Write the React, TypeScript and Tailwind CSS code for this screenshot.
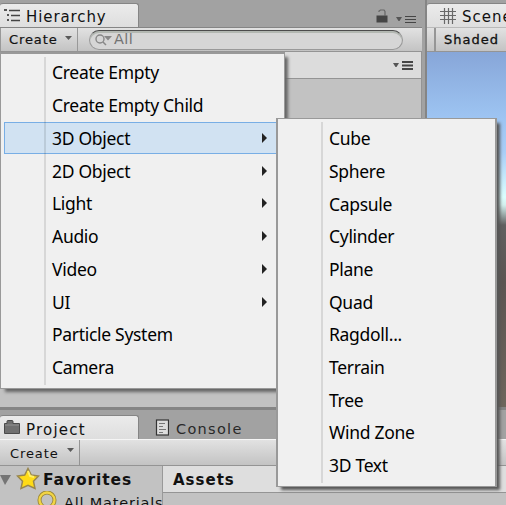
import React from "react";

const CREATE_ITEMS = [
  { label: "Create Empty" },
  { label: "Create Empty Child" },
  { label: "3D Object", sub: true, active: true },
  { label: "2D Object", sub: true },
  { label: "Light", sub: true },
  { label: "Audio", sub: true },
  { label: "Video", sub: true },
  { label: "UI", sub: true },
  { label: "Particle System" },
  { label: "Camera" },
];

const OBJECT_ITEMS = [
  "Cube", "Sphere", "Capsule", "Cylinder", "Plane", "Quad",
  "Ragdoll...", "Terrain", "Tree", "Wind Zone", "3D Text",
];

const BAR = "bg-linear-to-b from-[#e2e2e2] to-[#c3c3c3]";
const TAB = "rounded-t-[3px] border-t border-r border-t-[#858585] border-r-[#858585] bg-linear-to-b from-[#ebebeb] to-[#dedede]";

function Caret() {
  return (
    <svg width="7" height="4" viewBox="0 0 7 4" className="shrink-0">
      <path d="M0 0H7L3.5 4Z" fill="#595959" />
    </svg>
  );
}

function PaneMenu({ bold = false }: { bold?: boolean }) {
  return (
    <svg width="20" height="9" viewBox="0 0 20 9" className="shrink-0">
      <path d="M0 2H6L3.5 6H2.5Z" fill="#555" />
      {bold ? (
        <path d="M9 1H20M9 4.5H20M9 8H20" stroke="#454545" strokeWidth="1.8" />
      ) : (
        <path d="M9 1.5H20M9 4.5H20M9 7.5H20" stroke="#454545" />
      )}
    </svg>
  );
}

function Hierarchy() {
  return (
    <section className="flex w-[422px] shrink-0 flex-col">
      <div className="flex h-[27px] shrink-0 items-end bg-[#a2a2a2]">
        <div className={`flex h-6 w-[139px] items-center pl-1 ${TAB}`}>
          <svg width="17" height="14" viewBox="0 0 17 14" className="-mt-0.5 shrink-0">
            <path d="M0 2H3M3 7H5M3 12H5" stroke="#555" strokeWidth="1.8" />
            <path d="M5 2.5H16M7 7.5H16M7 12.5H16" stroke="#444" strokeWidth="1.6" />
          </svg>
          <span className="ml-[5px] mt-[3px] text-[15px] tracking-[0.9px]">Hierarchy</span>
        </div>
        <div className="ml-auto flex items-center pr-[6px]">
          <svg width="12" height="14" viewBox="0 0 12 14" className="mb-1">
            <rect x="0.5" y="6.5" width="11" height="7" fill="#454545" />
            <path d="M3 3V2L4.5 1H8L9 2.5V7" fill="none" stroke="#666" strokeWidth="1.2" />
          </svg>
          <div className="mb-px ml-2 mt-1"><PaneMenu /></div>
        </div>
      </div>
      <div className={`flex h-[25px] shrink-0 items-center border-t border-b border-t-[#858585] border-b-[#949494] ${BAR}`}>
        <div className="flex h-full w-[78px] shrink-0 items-center border-r border-l border-[#999] pl-2 text-[13px]">
          <span className="mt-px w-[50px] tracking-[0.9px] [-webkit-text-stroke:0.2px]">Create</span>
          <span className="mb-1 ml-1.5 flex"><Caret /></span>
        </div>
        <div className="ml-[11px] flex h-5 w-[314px] items-center rounded-full border border-[#999] border-t-[#4c4c4c] bg-[#d6d6d6] pl-[5px] shadow-[inset_0_2px_0_#b3b8b2]">
          <svg width="17" height="12" viewBox="0 0 17 12" className="shrink-0">
            <circle cx="5" cy="5" r="4" fill="none" stroke="#888" strokeWidth="1.4" />
            <path d="M8 8L11 11" stroke="#888" strokeWidth="1.5" />
            <path d="M9 2H17L13 6.5Z" fill="#888" />
          </svg>
          <span className="mb-px ml-0.5 text-[14.5px] leading-none tracking-[0.4px] text-[#737373]">All</span>
        </div>
      </div>
      <div className="flex h-[27px] shrink-0 items-center justify-end border-r border-b border-[#949494] bg-[#dcdcdc] pr-[8px]">
        <PaneMenu bold />
      </div>
      <div className="flex-1 border-r border-[#949494] bg-[#c2c2c2]" />
    </section>
  );
}

function Scene() {
  return (
    <section className="-ml-px flex w-[81px] shrink-0 flex-col overflow-hidden border-l-2 border-[#858585]">
      <div className="flex h-[27px] shrink-0 items-end bg-[#a2a2a2]">
        <div className={`flex h-6 w-[100px] shrink-0 items-center pl-3 ${TAB}`}>
          <svg width="18" height="18" viewBox="0 0 18 18" className="shrink-0">
            <path d="M5.5 1V17M9.5 1V17M13.5 1V17M1 4.5H17M1 8.5H17M1 12.5H17" stroke="#686868" strokeWidth="1.2" />
          </svg>
          <span className="ml-[5px] mt-[3px] text-[15px] tracking-[1px]">Scene</span>
        </div>
      </div>
      <div className={`flex h-[25px] shrink-0 items-center border-t border-b border-t-[#b9b9b9] border-b-[#949494] ${BAR}`}>
        <div className="ml-[7px] flex h-full items-center border-l-2 border-[#969696] pl-2 pt-px text-[13px] tracking-[1px] [-webkit-text-stroke:0.3px]">Shaded</div>
      </div>
      <div className="flex-1 bg-[linear-gradient(#87a6d8_0px,#9dc4f2_65px,#a9cef7_100px,#dbffff_145px,#d3f0ee_153px,#606060_173px,#5c5552_230px,#6e665c_355px)]" />
    </section>
  );
}

function Project() {
  return (
    <section className="flex h-[98px] shrink-0 flex-col border-t-[3px] border-[#858585]">
      <div className="flex h-[29px] shrink-0 items-end bg-[#a2a2a2]">
        <div className={`flex h-6 w-[139px] shrink-0 items-center pl-1 ${TAB}`}>
          <svg width="17" height="14" viewBox="0 0 17 14" className="-mt-0.5 shrink-0">
            <path d="M0.5 3.5H3V1.5Q3 0.5 4 0.5H8Q9 0.5 9 1.5V3.5H15.5V13.5H0.5Z" fill="#707070" stroke="#4b4b4b" />
            <path d="M1 5H15" stroke="#919191" />
          </svg>
          <span className="ml-[5px] mt-[5px] text-[15px] tracking-[1.2px]">Project</span>
        </div>
        <div className="ml-4 flex h-6 items-center">
          <svg width="14" height="17" viewBox="0 0 14 17">
            <rect x="1.5" y="1" width="12" height="15" fill="#ddd" stroke="#343434" strokeWidth="1.2" />
            <path d="M4 4.5H10M4 7.5H8M4 10.5H11M4 13.5H8" stroke="#777" />
          </svg>
          <span className="ml-[7px] mt-[5px] text-[14.5px] tracking-[1.3px] text-[#292929]">Console</span>
        </div>
      </div>
      <div className={`flex h-[27px] shrink-0 border-t border-b border-t-[#f5f5f5] border-b-[#949494] ${BAR}`}>
        <div className="flex w-[80px] items-center border-r border-[#949494] pl-[10px] text-[13px]">
          <span className="mt-0.5 w-[51px] tracking-[0.9px]">Create</span>
          <span className="mb-1.5 ml-1.5 flex"><Caret /></span>
        </div>
      </div>
      <div className="flex h-[39px] bg-[#c2c2c2]">
        <div className="w-[163px] shrink-0 overflow-hidden border-r border-[#999]">
          <div className="flex h-[27px] items-center">
            <svg width="11" height="11" viewBox="0 0 11 11"><path d="M0 1H11L5 11Z" fill="#757575" /></svg>
            <svg width="24" height="24" viewBox="0 0 24 24" className="-mt-0.5 ml-[5px]">
              <path d="M12 1.5L15.3 8L22.5 9L17.5 14.3L19 21.5L12 18.3L5 21.5L6.5 14.3L1.5 9L8.7 8Z" fill="#ffdb16" stroke="#98864e" strokeWidth="1.5" />
              <path d="M12 4L14 9L18 10" stroke="#fff169" strokeWidth="2" fill="none" />
            </svg>
            <span className="ml-[3px] mt-0.5 text-[15.5px] font-bold tracking-[0.9px]">Favorites</span>
          </div>
          <div className="flex h-6 items-start pl-[37px]">
            <svg width="20" height="20" viewBox="0 0 20 20" className="-mt-0.5 shrink-0">
              <circle cx="10" cy="9" r="7.5" fill="none" stroke="#9a8634" strokeWidth="4" />
              <circle cx="10" cy="9" r="7.5" fill="none" stroke="#f2d545" strokeWidth="2.3" />
            </svg>
            <span className="ml-[7px] whitespace-nowrap text-[14.5px] leading-[21px] tracking-[0.8px]">All Materials</span>
          </div>
        </div>
        <div className="flex-1">
          <div className="flex h-[27px] items-center border-b border-[#949494] bg-[#dedede] pl-[10px] pt-0.5 text-[15px] font-bold tracking-[1px]">Assets</div>
        </div>
      </div>
    </section>
  );
}

const MENU_TEXT = "font-['Noto_Sans','Open_Sans',sans-serif] text-[17.5px] tracking-[-0.3px] text-black";

export default function App() {
  return (
    <main className="relative flex h-[505px] w-[506px] flex-col overflow-hidden bg-[#a2a2a2] font-['DejaVu_Sans',Verdana,sans-serif] text-[#111]">
      <div className="flex h-[407px] shrink-0">
        <Hierarchy />
        <div className="w-1 shrink-0 bg-[#a2a2a2]" />
        <Scene />
      </div>
      <Project />

      <div className={`absolute left-0 top-[52px] h-[337px] w-[285px] border border-t-2 border-[#999] bg-[#f0f0f0] pt-[2px] shadow-[4px_4px_3px_-1px_#666] ${MENU_TEXT}`}>
        <div className="relative h-[329px] before:absolute before:bottom-0 before:left-[43px] before:top-px before:w-[2px] before:bg-black/10">
          {CREATE_ITEMS.map((item) => (
            <div
              key={item.label}
              className={`ml-[3px] flex h-[32.75px] items-center justify-between border pl-[47px] pr-[15px] ${item.active ? "border-[#78aee5] bg-[#d1e2f2]" : "border-transparent"}`}
            >
              <span>{item.label}</span>
              {item.sub && <svg width="6" height="10" viewBox="0 0 6 10"><path d="M0 0L5 5L0 10Z" fill="#222" /></svg>}
            </div>
          ))}
        </div>
      </div>

      <div className={`absolute left-[276px] top-[118px] h-[369px] w-[221px] border border-x-2 border-[#999] bg-[#f0f0f0] pt-[3px] shadow-[4px_4px_3px_-1px_#555] ${MENU_TEXT}`}>
        <div className="relative h-[361px] before:absolute before:bottom-0 before:left-[43px] before:top-0 before:w-[2px] before:bg-black/10">
          {OBJECT_ITEMS.map((label) => (
            <div key={label} className="flex h-[32.7px] items-center pl-[51px]">{label}</div>
          ))}
        </div>
      </div>
    </main>
  );
}
